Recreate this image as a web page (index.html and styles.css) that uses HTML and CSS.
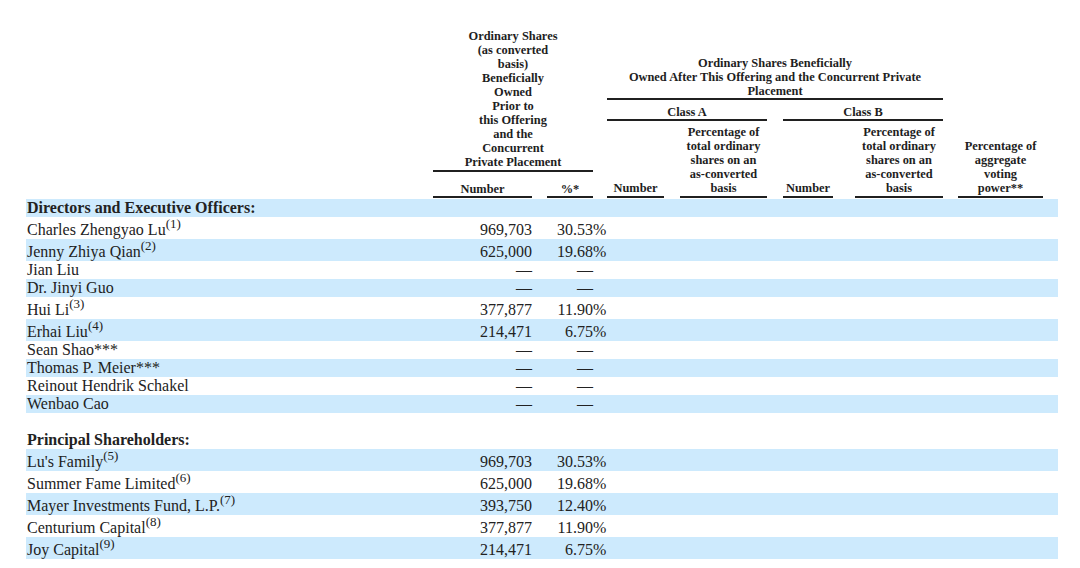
FILE: index.html
```html
<!DOCTYPE html>
<html lang="en">
<head>
<meta charset="utf-8">
<title>Beneficial Ownership Table</title>
<link rel="stylesheet" href="styles.css">
</head>
<body>
<div class="page">
  <div class="thead">
    <div class="spacer"></div>
    <div class="prior">
      <div class="prior-title ul">Ordinary Shares<br>(as converted<br>basis)<br>Beneficially<br>Owned<br>Prior to<br>this Offering<br>and the<br>Concurrent<br>Private Placement</div>
      <div class="prior-sub">
        <div class="ul">Number</div>
        <div class="g-15"><div class="ul">%*</div></div>
      </div>
    </div>
    <div class="after">
      <div class="h-top g-14"><div class="ul">Ordinary Shares Beneficially<br>Owned After This Offering and the Concurrent Private<br>Placement</div></div>
      <div class="h-class-a g-14"><div class="ul">Class A</div></div>
      <div class="h-class-b g-16"><div class="ul">Class B</div></div>
      <div class="h-sub c1 g-14"><div class="ul">Number</div></div>
      <div class="h-sub c2 g-16"><div class="ul">Percentage of<br>total ordinary<br>shares on an<br>as-converted<br>basis</div></div>
      <div class="h-sub c3 g-16"><div class="ul">Number</div></div>
      <div class="h-sub c4 g-22"><div class="ul">Percentage of<br>total ordinary<br>shares on an<br>as-converted<br>basis</div></div>
      <div class="h-sub c5 g-15"><div class="ul">Percentage of<br>aggregate<br>voting<br>power**</div></div>
    </div>
  </div>

  <div class="tbody">
    <div class="row alt"><div class="name section">Directors and Executive Officers:</div></div>
    <div class="row"><div class="name">Charles Zhengyao Lu<sup>(1)</sup></div><div class="num">969,703</div><div class="pct">30.53<span class="pc">%</span></div></div>
    <div class="row alt"><div class="name">Jenny Zhiya Qian<sup>(2)</sup></div><div class="num">625,000</div><div class="pct">19.68<span class="pc">%</span></div></div>
    <div class="row"><div class="name">Jian Liu</div><div class="num">—</div><div class="pct">—</div></div>
    <div class="row alt"><div class="name">Dr. Jinyi Guo</div><div class="num">—</div><div class="pct">—</div></div>
    <div class="row"><div class="name">Hui Li<sup>(3)</sup></div><div class="num">377,877</div><div class="pct">11.90<span class="pc">%</span></div></div>
    <div class="row alt"><div class="name">Erhai Liu<sup>(4)</sup></div><div class="num">214,471</div><div class="pct">6.75<span class="pc">%</span></div></div>
    <div class="row"><div class="name">Sean Shao***</div><div class="num">—</div><div class="pct">—</div></div>
    <div class="row alt"><div class="name">Thomas P. Meier***</div><div class="num">—</div><div class="pct">—</div></div>
    <div class="row"><div class="name">Reinout Hendrik Schakel</div><div class="num">—</div><div class="pct">—</div></div>
    <div class="row alt"><div class="name">Wenbao Cao</div><div class="num">—</div><div class="pct">—</div></div>
    <div class="row blank"></div>
    <div class="row"><div class="name section">Principal Shareholders:</div></div>
    <div class="row alt"><div class="name">Lu's Family<sup>(5)</sup></div><div class="num">969,703</div><div class="pct">30.53<span class="pc">%</span></div></div>
    <div class="row"><div class="name">Summer Fame Limited<sup>(6)</sup></div><div class="num">625,000</div><div class="pct">19.68<span class="pc">%</span></div></div>
    <div class="row alt"><div class="name">Mayer Investments Fund, L.P.<sup>(7)</sup></div><div class="num">393,750</div><div class="pct">12.40<span class="pc">%</span></div></div>
    <div class="row"><div class="name">Centurium Capital<sup>(8)</sup></div><div class="num">377,877</div><div class="pct">11.90<span class="pc">%</span></div></div>
    <div class="row alt"><div class="name">Joy Capital<sup>(9)</sup></div><div class="num">214,471</div><div class="pct">6.75<span class="pc">%</span></div></div>
  </div>
</div>
</body>
</html>
```

FILE: styles.css
```css
html, body {
  margin: 0;
  padding: 0;
  background: #ffffff;
}

body {
  font-family: "Liberation Serif", "Times New Roman", serif;
  color: #222222;
}

.page {
  width: 1032px;
  margin-left: 26px;
  padding-top: 29px;
}

/* ---------- header ---------- */
.thead {
  display: flex;
  align-items: flex-end;
  font-weight: bold;
  font-size: 12.4px;
  line-height: 14px;
  text-align: center;
  color: #1e1e1e;
}

.spacer {
  width: 407px;
  flex: none;
}

.ul {
  border-bottom: 2px solid #202020;
}

.prior {
  width: 160px;
  flex: none;
  display: flex;
  flex-direction: column;
}

.prior-title {
  padding-bottom: 1px;
}

.prior-sub {
  margin-top: 10px;
  display: grid;
  grid-template-columns: 99px 61px;
}

.after {
  width: 465px;
  flex: none;
  display: grid;
  grid-template-columns: 71px 103px 66px 110px 100px 15px;
  align-items: end;
}

.g-14 { padding-left: 14px; }
.g-15 { padding-left: 15px; }
.g-16 { padding-left: 16px; }
.g-22 { padding-left: 22px; }

.h-top {
  grid-column: 1 / 5;
  grid-row: 1;
}

.h-class-a {
  grid-column: 1 / 3;
  grid-row: 2;
  margin-top: 5px;
}

.h-class-b {
  grid-column: 3 / 5;
  grid-row: 2;
  margin-top: 5px;
}

.h-sub {
  grid-row: 3;
  margin-top: 4px;
}

.h-sub .ul {
  padding-bottom: 1px;
}

.c1 { grid-column: 1; }
.c2 { grid-column: 2; }
.c3 { grid-column: 3; }
.c4 { grid-column: 4; }
.c5 { grid-column: 5; }

/* ---------- body ---------- */
.tbody {
  margin-top: 1px;
  font-size: 16px;
  line-height: 18px;
}

.row {
  display: grid;
  grid-template-columns: 407px 99px 61px 71px 103px 66px 110px 100px 15px;
  align-items: baseline;
}

.row.alt {
  background: #cdeafd;
}

.row.blank {
  height: 18px;
}

.name {
  padding-left: 1px;
  white-space: nowrap;
}

.name.section {
  font-weight: bold;
}

sup {
  font-size: 13px;
  line-height: 13px;
  vertical-align: 7px;
}

.num {
  text-align: right;
}

.pct {
  padding-left: 15px;
  text-align: right;
}

.pc {
  margin-right: -13.3px;
}
```
